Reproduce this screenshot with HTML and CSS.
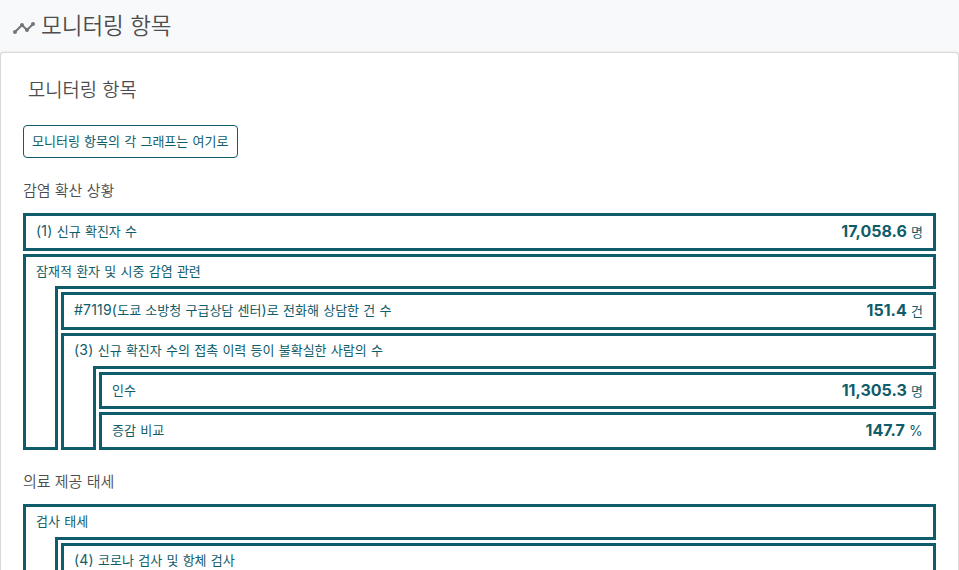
FILE: index.html
```html
<!DOCTYPE html>
<html lang="ko">
<head>
<meta charset="utf-8">
<title>모니터링 항목</title>
<link rel="stylesheet" href="styles.css">
</head>
<body>
<header class="page-header">
  <svg class="page-icon" viewBox="0 0 24 24" width="24" height="24" aria-hidden="true"><path d="M23 8c0 1.100-.9 2-2 2-.18 0-.35-.02-.51-.07l-3.560 3.550c.05.160.070.340.070.520 0 1.100-.9 2-2 2s-2-.9-2-2c0-.18.020-.36.070-.52l-2.550-2.550c-.16.050-.34.070-.52.070s-.36-.02-.52-.07l-4.550 4.560c.05.160.070.330.070.510 0 1.100-.9 2-2 2s-2-.9-2-2 .9-2 2-2c.18 0 .35.020.510.070l4.560-4.550C8.020 9.360 8 9.180 8 9c0-1.100.9-2 2-2s2 .9 2 2c0 .18-.02.360-.07.520l2.550 2.550c.16-.05.340-.07.520-.07s.36.020.520.070l3.550-3.560C19.020 8.350 19 8.180 19 8c0-1.100.9-2 2-2s2 .9 2 2z"/></svg>
  <h1>모니터링 항목</h1>
</header>
<main class="card">
  <h2>모니터링 항목</h2>
  <a class="button">모니터링 항목의 각 그래프는 여기로</a>
  <section>
    <h3>감염 확산 상황</h3>
    <div class="list">
      <div class="box row"><span><span class="latin">(1)</span> 신규 확진자 수</span><span class="value"><strong>17,058.6</strong> 명</span></div>
      <div class="group">
        <div class="box head">잠재적 환자 및 시중 감염 관련</div>
        <div class="body">
          <div class="stem"></div>
          <div class="children">
            <div class="box row"><span><span class="latin">#7119(</span>도쿄 소방청 구급상담 센터<span class="latin">)</span>로 전화해 상담한 건 수</span><span class="value"><strong>151.4</strong> 건</span></div>
            <div class="group">
              <div class="box head tall"><span><span class="latin">(3)</span> 신규 확진자 수의 접촉 이력 등이 불확실한 사람의 수</span></div>
              <div class="body">
                <div class="stem"></div>
                <div class="children">
                  <div class="box row short"><span>인수</span><span class="value"><strong>11,305.3</strong> 명</span></div>
                  <div class="box row"><span>증감 비교</span><span class="value"><strong>147.7</strong> <span class="latin">%</span></span></div>
                </div>
              </div>
            </div>
          </div>
        </div>
      </div>
    </div>
  </section>
  <section>
    <h3>의료 제공 태세</h3>
    <div class="list">
      <div class="group">
        <div class="box head tall">검사 태세</div>
        <div class="body">
          <div class="stem"></div>
          <div class="children">
            <div class="box head tall"><span><span class="latin">(4)</span> 코로나 검사 및 항체 검사</span></div>
          </div>
        </div>
      </div>
    </div>
  </section>
</main>
</body>
</html>
```
FILE: styles.css
```css
* { box-sizing: border-box; }
html { height: 100%; overflow: hidden; }
body {
  height: 100%;
  margin: 0;
  overflow: hidden;
  background: #f8f9fb;
  color: #4d4d4d;
  font-family: Inter, "Noto Sans CJK KR", sans-serif;
  font-size: 13px;
  font-weight: 400;
  word-spacing: .6px;
}
h1, h2, h3 { margin: 0; font-weight: 350; word-spacing: 0; }
.page-header { display: flex; align-items: center; height: 52px; padding-left: 12px; }
.page-icon { margin: 3px 5px 0 0; fill: #757575; }
h1 { font-size: 22.5px; line-height: 36px; }
.card {
  height: 518px;
  overflow: hidden;
  padding: 19px 22px 0;
  background: #fff;
  border: 1px solid #d9d9d9;
  border-bottom: 0;
  border-radius: 4px 4px 0 0;
  box-shadow: 0 0 2px rgba(0, 0, 0, .15);
}
h2 { height: 53px; padding-left: 5px; font-size: 18.75px; line-height: 38px; }
.button {
  display: inline-flex;
  align-items: center;
  width: 215px;
  height: 33px;
  padding: 0 8px 2px;
  border: 1px solid #0f5c6a;
  border-radius: 4px;
  color: #0f5c6a;
  white-space: nowrap;
  vertical-align: top;
}
section { padding-top: 20px; }
h3 { height: 35px; font-size: 15px; line-height: 26px; }
section + section h3 { height: 34px; line-height: 24px; }
.box {
  display: flex;
  align-items: center;
  border: 3px solid #0f5c6a;
  color: #0f5c6a;
  background: #fff;
  padding: 0 10px 2px;
  white-space: nowrap;
}
.row { height: 38px; justify-content: space-between; }
.row > span:first-child { padding-bottom: 2px; }
.short { height: 37px; }
.short > span:first-child { padding-bottom: 0; }
.head { height: 35px; }
.tall { height: 36px; padding-bottom: 3px; }
.list, .children { display: flex; flex-direction: column; gap: 3px; }
.body { display: flex; }
.stem {
  width: 35px;
  margin-top: -3px;
  border: 3px solid #0f5c6a;
  border-top: 0;
  background: #fff;
}
.children { flex: 1; padding: 3px 0 0 3px; }
.latin { font-size: 14px; letter-spacing: .2px; }
.value strong { font-size: 16px; font-weight: 700; }
```
